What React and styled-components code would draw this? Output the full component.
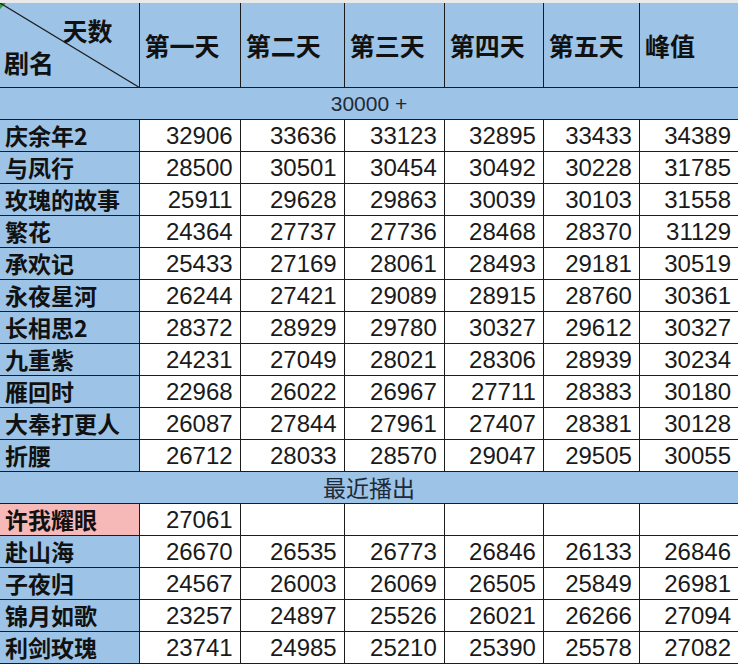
import React from 'react'
import styled, { createGlobalStyle } from 'styled-components'

const GlobalStyle = createGlobalStyle`
  html, body {
    margin: 0;
    padding: 0;
    background: #ffffff;
    overflow: hidden;
  }
`

const BLUE = '#9dc3e6'
const LINE = '#1c1c1c'
const CJK = '"Noto Sans CJK SC", "Liberation Sans", sans-serif'

const days = ['第一天', '第二天', '第三天', '第四天', '第五天', '峰值']
const widths = [139, 101, 104, 100, 99, 96, 99]

const topShows = [
  ['庆余年2', 32906, 33636, 33123, 32895, 33433, 34389],
  ['与凤行', 28500, 30501, 30454, 30492, 30228, 31785],
  ['玫瑰的故事', 25911, 29628, 29863, 30039, 30103, 31558],
  ['繁花', 24364, 27737, 27736, 28468, 28370, 31129],
  ['承欢记', 25433, 27169, 28061, 28493, 29181, 30519],
  ['永夜星河', 26244, 27421, 29089, 28915, 28760, 30361],
  ['长相思2', 28372, 28929, 29780, 30327, 29612, 30327],
  ['九重紫', 24231, 27049, 28021, 28306, 28939, 30234],
  ['雁回时', 22968, 26022, 26967, 27711, 28383, 30180],
  ['大奉打更人', 26087, 27844, 27961, 27407, 28381, 30128],
  ['折腰', 26712, 28033, 28570, 29047, 29505, 30055],
]

const recentShows = [
  ['许我耀眼', 27061, '', '', '', '', '', true],
  ['赴山海', 26670, 26535, 26773, 26846, 26133, 26846],
  ['子夜归', 24567, 26003, 26069, 26505, 25849, 26981],
  ['锦月如歌', 23257, 24897, 25526, 26021, 26266, 27094],
  ['利剑玫瑰', 23741, 24985, 25210, 25390, 25578, 27082],
]

const Sheet = styled.div`
  width: 738px;
  height: 664px;
  overflow: hidden;
  background: #ffffff;
`

const TopStrip = styled.div`
  height: 3px;
  background: #e9e9e9;
`

const Table = styled.table`
  border-collapse: collapse;
  table-layout: fixed;
  width: 739px;
`

const HeadCell = styled.th`
  height: 84px;
  padding: 0 0 0 5px;
  background: ${BLUE};
  border: 1px solid ${LINE};
  border-top: none;
  font-family: ${CJK};
  font-weight: 700;
  font-size: 25px;
  color: #111111;
  text-align: left;
  vertical-align: middle;
  white-space: nowrap;
`

const CornerCell = styled.th`
  position: relative;
  height: 84px;
  padding: 0;
  background: ${BLUE};
  border: 1px solid ${LINE};
  border-top: none;
  border-left: none;
  font-family: ${CJK};
  font-weight: 700;
  font-size: 25px;
  color: #111111;
`

const CornerInner = styled.div`
  display: flex;
  flex-direction: column;
  height: 84px;
  padding: 12px 0 0 4px;
  box-sizing: border-box;
  line-height: 30px;
  text-align: left;
`

const CornerTop = styled.span`
  align-self: flex-end;
  margin-right: 26px;
`

const CornerBottom = styled.span`
  margin-top: 2px;
`

const Diagonal = styled.svg`
  position: absolute;
  left: 0;
  top: 0;
  width: 100%;
  height: 100%;
  pointer-events: none;
`

const Marker = styled.span`
  position: absolute;
  left: 0;
  top: 0;
  width: 0;
  height: 0;
  border-top: 6px solid #2e9e3a;
  border-right: 6px solid transparent;
`

const SectionCell = styled.td`
  height: 31px;
  padding: 0;
  background: ${BLUE};
  border: 1px solid ${LINE};
  border-left: none;
  font-family: ${(p) => (p.$cjk ? CJK : '"Liberation Sans", sans-serif')};
  font-size: ${(p) => (p.$cjk ? '23px' : '21px')};
  color: #1f2a38;
  text-align: center;
  line-height: 31px;
`

const NameCell = styled.td`
  height: 31px;
  padding: 0 0 0 5px;
  background: ${(p) => (p.$hot ? '#f7b8b8' : BLUE)};
  border: 1px solid ${LINE};
  border-left: none;
  font-family: ${CJK};
  font-weight: 700;
  font-size: 23px;
  color: #111111;
  white-space: nowrap;
  overflow: hidden;
  line-height: 31px;
`

const NumCell = styled.td`
  height: 31px;
  padding: 0 7px 0 0;
  background: #ffffff;
  border: 1px solid ${LINE};
  font-family: "Liberation Sans", sans-serif;
  font-size: 24px;
  color: #1a1a1a;
  text-align: right;
  line-height: 31px;
`

function DataRow({ row }) {
  const [name, ...rest] = row
  const hot = rest.length > 6 && rest[6] === true
  const nums = rest.slice(0, 6)
  return (
    <tr>
      <NameCell $hot={hot}>{name}</NameCell>
      {nums.map((n, i) => (
        <NumCell key={i}>{n}</NumCell>
      ))}
    </tr>
  )
}

export default function App() {
  return (
    <Sheet>
      <GlobalStyle />
      <TopStrip />
      <Table>
        <colgroup>
          {widths.map((w, i) => (
            <col key={i} style={{ width: w }} />
          ))}
        </colgroup>
        <thead>
          <tr>
            <CornerCell>
              <Marker />
              <Diagonal viewBox="0 0 139 85" preserveAspectRatio="none">
                <line x1="0" y1="0" x2="139" y2="85" stroke={LINE} strokeWidth="1.2" />
              </Diagonal>
              <CornerInner>
                <CornerTop>天数</CornerTop>
                <CornerBottom>剧名</CornerBottom>
              </CornerInner>
            </CornerCell>
            {days.map((d) => (
              <HeadCell key={d}>{d}</HeadCell>
            ))}
          </tr>
        </thead>
        <tbody>
          <tr>
            <SectionCell colSpan={7}>30000 +</SectionCell>
          </tr>
          {topShows.map((r) => (
            <DataRow key={r[0]} row={r} />
          ))}
          <tr>
            <SectionCell colSpan={7} $cjk>最近播出</SectionCell>
          </tr>
          {recentShows.map((r) => (
            <DataRow key={r[0]} row={r} />
          ))}
        </tbody>
      </Table>
    </Sheet>
  )
}
